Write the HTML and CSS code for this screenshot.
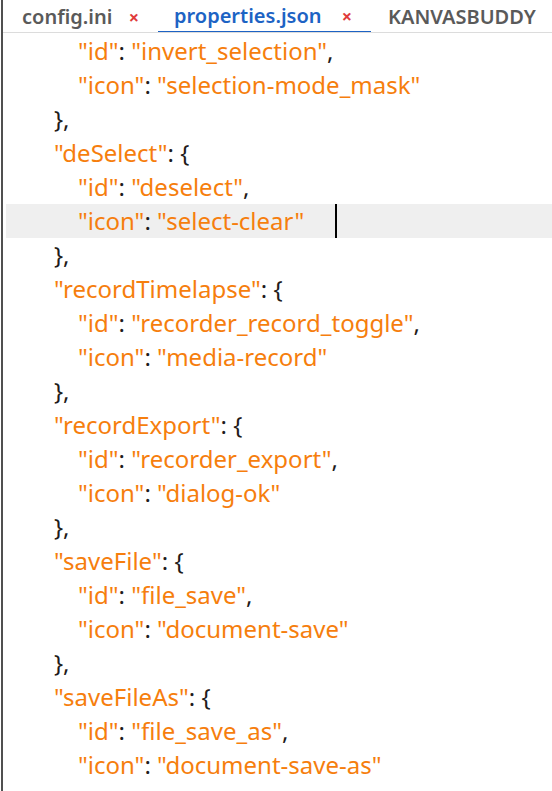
FILE: index.html
```html
<!DOCTYPE html>
<html>
<head>
<meta charset="utf-8">
<link rel="stylesheet" href="styles.css">
</head>
<body>
<div class="editor">
  <div class="tabbar">
    <div class="tab"><span class="tab-name">config.ini</span><span class="close">×</span></div>
    <div class="tab active"><span class="tab-name">properties.json</span><span class="close">×</span></div>
    <div class="tab"><span class="tab-name">KANVASBUDDY</span></div>
  </div>
  <div class="code">
    <div class="line l2"><span class="s">"id"</span><span class="p">: </span><span class="s">"invert_selection"</span><span class="p">,</span></div>
    <div class="line l2"><span class="s">"icon"</span><span class="p">: </span><span class="s">"selection-mode_mask"</span></div>
    <div class="line l1"><span class="p">},</span></div>
    <div class="line l1"><span class="s">"deSelect"</span><span class="p">: {</span></div>
    <div class="line l2"><span class="s">"id"</span><span class="p">: </span><span class="s">"deselect"</span><span class="p">,</span></div>
    <div class="line l2 current"><span class="s">"icon"</span><span class="p">: </span><span class="s">"select-clear"</span><span class="cursor"></span></div>
    <div class="line l1"><span class="p">},</span></div>
    <div class="line l1"><span class="s">"recordTimelapse"</span><span class="p">: {</span></div>
    <div class="line l2"><span class="s">"id"</span><span class="p">: </span><span class="s">"recorder_record_toggle"</span><span class="p">,</span></div>
    <div class="line l2"><span class="s">"icon"</span><span class="p">: </span><span class="s">"media-record"</span></div>
    <div class="line l1"><span class="p">},</span></div>
    <div class="line l1"><span class="s">"recordExport"</span><span class="p">: {</span></div>
    <div class="line l2"><span class="s">"id"</span><span class="p">: </span><span class="s">"recorder_export"</span><span class="p">,</span></div>
    <div class="line l2"><span class="s">"icon"</span><span class="p">: </span><span class="s">"dialog-ok"</span></div>
    <div class="line l1"><span class="p">},</span></div>
    <div class="line l1"><span class="s">"saveFile"</span><span class="p">: {</span></div>
    <div class="line l2"><span class="s">"id"</span><span class="p">: </span><span class="s">"file_save"</span><span class="p">,</span></div>
    <div class="line l2"><span class="s">"icon"</span><span class="p">: </span><span class="s">"document-save"</span></div>
    <div class="line l1"><span class="p">},</span></div>
    <div class="line l1"><span class="s">"saveFileAs"</span><span class="p">: {</span></div>
    <div class="line l2"><span class="s">"id"</span><span class="p">: </span><span class="s">"file_save_as"</span><span class="p">,</span></div>
    <div class="line l2"><span class="s">"icon"</span><span class="p">: </span><span class="s">"document-save-as"</span></div>
  </div>
</div>
</body>
</html>
```
FILE: styles.css
```css
html, body {
  margin: 0;
  padding: 0;
  background: #ffffff;
  overflow: hidden;
}
body {
  width: 552px;
  height: 791px;
  font-family: "Noto Sans", "Open Sans", sans-serif;
}
.editor {
  margin-left: 1px;
  border-left: 2px solid #505050;
  height: 791px;
  box-sizing: border-box;
}
.tabbar {
  display: flex;
  height: 33px;
  border-bottom: 1px solid #dcdcdc;
  box-sizing: border-box;
  white-space: nowrap;
  overflow: hidden;
}
.tab {
  display: flex;
  align-items: center;
  flex: none;
  font-size: 20px;
  font-weight: 600;
  color: #5a5a5a;
  height: 33px;
  box-sizing: border-box;
}
.tab:first-child {
  padding-left: 19px;
  width: 155px;
}
.tab.active {
  width: 213px;
  padding-left: 16px;
  color: #1d63c4;
  border-bottom: 2px solid #1d63c4;
  height: 33px;
  margin-bottom: -1px;
}
.tab:last-child {
  padding-left: 17px;
}
.close {
  color: #e03b3b;
  font-size: 18px;
  font-weight: 700;
  margin-left: auto;
  margin-right: 19px;
}
.code {
  padding-left: 3px;
  padding-top: 1px;
  font-size: 24px;
}
.line {
  height: 34px;
  line-height: 34px;
  white-space: nowrap;
  display: flex;
  align-items: center;
}
.line.l1 { padding-left: 48px; }
.line.l2 { padding-left: 72px; }
.line.current {
  background: #efefef;
}
.s { color: #f67e0d; }
.p { color: #1f1c1b; white-space: pre; }
.cursor {
  width: 2px;
  height: 34px;
  background: #000;
  margin-left: 31px;
}
```
